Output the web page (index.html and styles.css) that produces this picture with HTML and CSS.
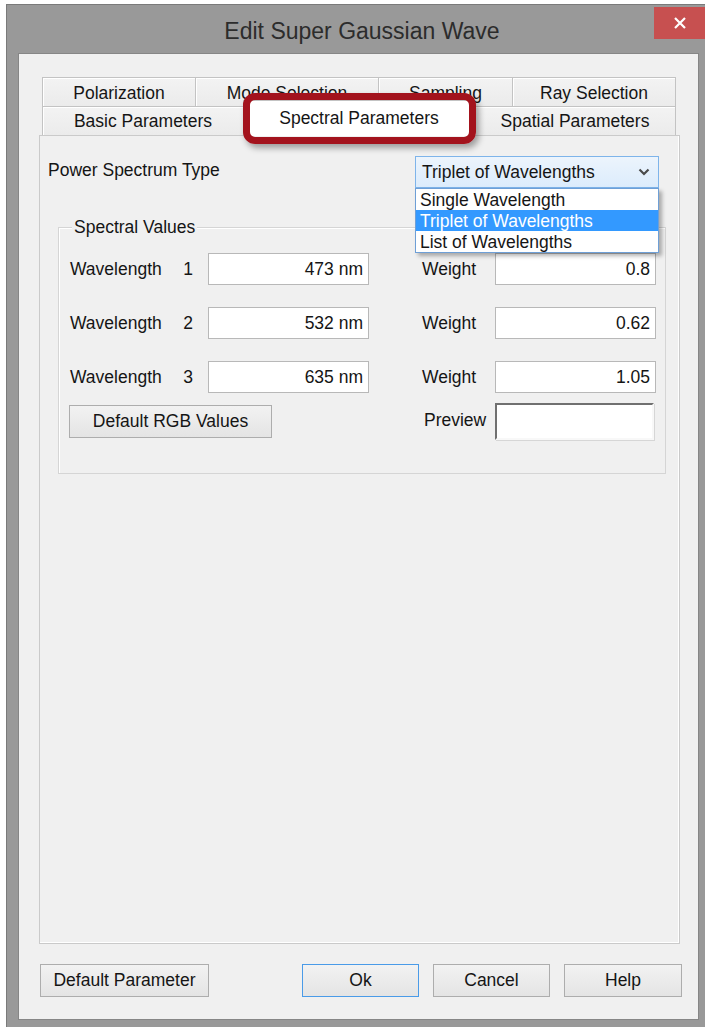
FILE: index.html
```html
<!DOCTYPE html>
<html lang="en">
<head>
<meta charset="utf-8">
<title>Edit Super Gaussian Wave</title>
<link rel="stylesheet" href="styles.css">
</head>
<body>
<div class="window">
  <div class="titlebar">
    <span class="title">Edit Super Gaussian Wave</span>
    <div class="close">
      <svg width="14" height="14" viewBox="0 0 14 14"><path d="M2 2 L12 12 M12 2 L2 12" stroke="#fff" stroke-width="2.2" fill="none"/></svg>
    </div>
  </div>
  <div class="client">
    <div class="tabctl">
      <div class="tabrow back">
        <div class="tab w153">Polarization</div>
        <div class="tab w183">Mode Selection</div>
        <div class="tab w134">Sampling</div>
        <div class="tab w164">Ray Selection</div>
      </div>
      <div class="tabrow front">
        <div class="tab w201">Basic Parameters</div>
        <div class="tab w231 selected">Spectral Parameters</div>
        <div class="tab w202">Spatial Parameters</div>
      </div>
      <div class="highlight"></div>
      <div class="panel">
        <div class="header">
          <span class="label">Power Spectrum Type</span>
          <div class="combo">
            <div class="combo-box">
              <span>Triplet of Wavelengths</span>
              <svg class="chev" width="12" height="8" viewBox="0 0 12 8"><path d="M1.5 1.5 L6 6 L10.5 1.5" stroke="#4a4a4a" stroke-width="2.2" fill="none"/></svg>
            </div>
            <ul class="combo-list">
              <li>Single Wavelength</li>
              <li class="active">Triplet of Wavelengths</li>
              <li>List of Wavelengths</li>
            </ul>
          </div>
        </div>
        <div class="group">
          <div class="legend">Spectral Values</div>
          <div class="row first">
            <div class="wl-label"><span>Wavelength</span><span class="num">1</span></div>
            <div class="field">473 nm</div>
            <div class="wt-label">Weight</div>
            <div class="field">0.8</div>
          </div>
          <div class="row">
            <div class="wl-label"><span>Wavelength</span><span class="num">2</span></div>
            <div class="field">532 nm</div>
            <div class="wt-label">Weight</div>
            <div class="field">0.62</div>
          </div>
          <div class="row">
            <div class="wl-label"><span>Wavelength</span><span class="num">3</span></div>
            <div class="field">635 nm</div>
            <div class="wt-label">Weight</div>
            <div class="field">1.05</div>
          </div>
          <div class="row last">
            <div class="btn rgb">Default RGB Values</div>
            <div class="pv-label">Preview</div>
            <div class="preview"></div>
          </div>
        </div>
      </div>
    </div>
    <div class="buttons">
      <div class="btn defparam">Default Parameter</div>
      <div class="btn ok">Ok</div>
      <div class="btn cancel">Cancel</div>
      <div class="btn help">Help</div>
    </div>
  </div>
</div>
</body>
</html>
```
FILE: styles.css
```css
html, body {
  margin: 0;
  padding: 0;
  background: #ffffff;
  overflow: hidden;
}

body {
  font-family: "Liberation Sans", Arial, sans-serif;
  font-size: 17.5px;
  color: #151515;
}

/* outer window frame */
.window {
  margin: 4px 0 0 6px;
  width: 699px;
  height: 1023px;
  box-sizing: border-box;
  background: #999999;
  border-top: 1px solid #7a7a7a;
  border-left: 1px solid #7a7a7a;
  display: flex;
  flex-direction: column;
}

.titlebar {
  height: 48px;
  display: flex;
  align-items: flex-start;
  position: relative;
}

.title {
  flex: 1;
  text-align: center;
  font-size: 23px;
  color: #2c2c2c;
  padding-top: 13px;
  padding-left: 12px;
}

.close {
  position: absolute;
  top: 2px;
  left: 647px;
  width: 51px;
  height: 32px;
  background: #c75050;
  display: flex;
  align-items: center;
  justify-content: center;
}

/* client area */
.client {
  margin: 0 0 0 11px;
  width: 681px;
  height: 967px;
  box-sizing: border-box;
  background: #f0f0f0;
  border: 1px solid #868686;
  padding: 23px 0 0 20px;
  display: flex;
  flex-direction: column;
}

.tabctl {
  position: relative;
  width: 641px;
}

.tabrow {
  display: flex;
  margin-left: 3px;
  height: 29px;
}

.tab {
  box-sizing: border-box;
  height: 29px;
  border: 1px solid #c3c3c3;
  border-bottom: none;
  background: linear-gradient(#f3f3f3, #ebebeb);
  box-shadow: inset 1px 1px 0 #ffffff;
  display: flex;
  align-items: center;
  justify-content: center;
  white-space: nowrap;
  margin-right: -1px;
}

.back .tab {
  padding-top: 2px;
}

.front .tab {
  padding-top: 1px;
}

.w153 { width: 154px; }
.w183 { width: 184px; }
.w134 { width: 135px; }
.w164 { width: 164px; }
.w201 { width: 202px; }
.w231 { width: 232px; }
.w202 { width: 202px; }

.front .tab.selected {
  background: #ffffff;
  height: 36px;
  margin-top: -6px;
  position: relative;
  z-index: 1;
  padding-top: 0;
  padding-bottom: 0;
}

/* annotation frame around the active tab */
.highlight {
  position: absolute;
  left: 204px;
  top: 16px;
  width: 233px;
  height: 51px;
  box-sizing: border-box;
  border: 7px solid #a3131d;
  border-radius: 12px;
  box-shadow: 3px 4px 6px rgba(0, 0, 0, 0.35);
  z-index: 3;
}

.panel {
  box-sizing: border-box;
  width: 641px;
  height: 809px;
  border: 1px solid #cacaca;
  box-shadow: inset -1px -1px 0 #ffffff;
  background: #f0f0f0;
  padding-top: 20px;
}

.header {
  display: flex;
  align-items: center;
  height: 32px;
}

.header .label {
  margin-left: 8px;
  margin-top: -3px;
}

.combo {
  margin-left: auto;
  margin-right: 20px;
  width: 244px;
  position: relative;
  z-index: 2;
}

.combo-box {
  box-sizing: border-box;
  height: 32px;
  border: 1px solid #7eb4ea;
  background: linear-gradient(#ecf4fc, #dcecfc);
  display: flex;
  align-items: center;
  padding: 0 7px 0 6px;
}

.combo-box span {
  flex: 1;
}

.chev {
  margin-right: 1px;
}

.combo-list {
  position: absolute;
  left: 0;
  top: 32px;
  width: 244px;
  box-sizing: border-box;
  margin: 0;
  padding: 0;
  list-style: none;
  background: #ffffff;
  border: 1px solid #6e9fd6;
  box-shadow: 3px 3px 4px rgba(0, 0, 0, 0.3);
}

.combo-list li {
  height: 21px;
  line-height: 22px;
  padding-left: 4px;
}

.combo-list li.active {
  background: #3399ff;
  color: #ffffff;
}

/* Spectral Values group box */
.group {
  margin: 39px 0 0 18px;
  width: 608px;
  height: 247px;
  box-sizing: border-box;
  border: 1px solid #d5d5d5;
  box-shadow: inset 1px 1px 0 #ffffff;
  padding-left: 11px;
}

.legend {
  margin: -11px 0 0 2px;
  padding: 0 2px;
  width: fit-content;
  line-height: 20px;
  background: #f0f0f0;
}

.row {
  display: flex;
  align-items: center;
  height: 32px;
  margin-top: 22px;
}

.row.first {
  margin-top: 16px;
}

.row.last {
  height: 37px;
  margin-top: 10px;
}

.wl-label {
  width: 138px;
  display: flex;
}

.wl-label .num {
  margin-left: auto;
  margin-right: 15px;
}

.field {
  box-sizing: border-box;
  width: 161px;
  height: 32px;
  background: #ffffff;
  border: 1px solid #b8b8b8;
  display: flex;
  align-items: center;
  justify-content: flex-end;
  padding-right: 5px;
}

.wt-label {
  width: 73px;
  margin-left: 53px;
}

.btn {
  box-sizing: border-box;
  height: 33px;
  border: 1px solid #adadad;
  background: linear-gradient(#f2f2f2, #e4e4e4);
  display: flex;
  align-items: center;
  justify-content: center;
  white-space: nowrap;
}

.btn.rgb {
  width: 203px;
  margin-left: -1px;
}

.pv-label {
  width: 71px;
  margin-left: 152px;
  margin-top: -2px;
}

.preview {
  box-sizing: border-box;
  width: 159px;
  height: 37px;
  background: #ffffff;
  border: 2px solid;
  border-color: #707070 #f8f8f8 #f8f8f8 #707070;
  box-shadow: 1px 1px 0 #d6d6d6;
}

/* dialog buttons */
.buttons {
  display: flex;
  margin-top: 20px;
  margin-left: 1px;
}

.buttons .btn {
  padding-bottom: 1px;
}

.defparam {
  width: 169px;
}

.ok {
  width: 117px;
  margin-left: 93px;
  border-color: #4a9be8;
}

.cancel {
  width: 117px;
  margin-left: 14px;
}

.help {
  width: 118px;
  margin-left: 14px;
}
```
